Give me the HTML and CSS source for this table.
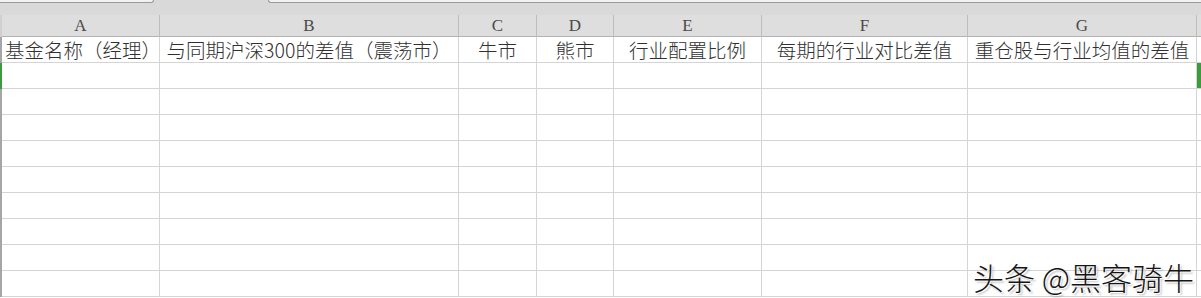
FILE: index.html
```html
<!DOCTYPE html>
<html lang="zh-CN">
<head>
  <meta charset="UTF-8" />
  <title>基金对比表</title>
  <link rel="stylesheet" href="styles.css">
</head>
<body>
  <div class="sheet">
    <!-- sheet tabs strip -->
    <div class="tabs">
      <div class="tab tab-left"></div>
      <div class="tab tab-right"></div>
    </div>

    <!-- column letters -->
    <div class="row head">
      <div class="gutter"></div>
      <div class="cell">A</div>
      <div class="cell">B</div>
      <div class="cell">C</div>
      <div class="cell">D</div>
      <div class="cell">E</div>
      <div class="cell">F</div>
      <div class="cell">G</div>
      <div class="cell filler"></div>
    </div>

    <!-- row 1: titles -->
    <div class="row">
      <div class="gutter"></div>
      <div class="cell left">基金名称（经理）</div>
      <div class="cell">与同期沪深300的差值（震荡市）</div>
      <div class="cell">牛市</div>
      <div class="cell">熊市</div>
      <div class="cell">行业配置比例</div>
      <div class="cell">每期的行业对比差值</div>
      <div class="cell">重仓股与行业均值的差值</div>
      <div class="cell filler"></div>
    </div>

    <!-- row 2 is the active one -->
    <div class="row active">
      <div class="gutter"></div>
      <div class="cell"></div><div class="cell"></div><div class="cell"></div><div class="cell"></div>
      <div class="cell"></div><div class="cell"></div><div class="cell"></div>
      <div class="cell filler"></div>
    </div>

    <div class="row">
      <div class="gutter"></div>
      <div class="cell"></div><div class="cell"></div><div class="cell"></div><div class="cell"></div>
      <div class="cell"></div><div class="cell"></div><div class="cell"></div>
      <div class="cell filler"></div>
    </div>
    <div class="row">
      <div class="gutter"></div>
      <div class="cell"></div><div class="cell"></div><div class="cell"></div><div class="cell"></div>
      <div class="cell"></div><div class="cell"></div><div class="cell"></div>
      <div class="cell filler"></div>
    </div>
    <div class="row">
      <div class="gutter"></div>
      <div class="cell"></div><div class="cell"></div><div class="cell"></div><div class="cell"></div>
      <div class="cell"></div><div class="cell"></div><div class="cell"></div>
      <div class="cell filler"></div>
    </div>
    <div class="row">
      <div class="gutter"></div>
      <div class="cell"></div><div class="cell"></div><div class="cell"></div><div class="cell"></div>
      <div class="cell"></div><div class="cell"></div><div class="cell"></div>
      <div class="cell filler"></div>
    </div>
    <div class="row">
      <div class="gutter"></div>
      <div class="cell"></div><div class="cell"></div><div class="cell"></div><div class="cell"></div>
      <div class="cell"></div><div class="cell"></div><div class="cell"></div>
      <div class="cell filler"></div>
    </div>
    <div class="row">
      <div class="gutter"></div>
      <div class="cell"></div><div class="cell"></div><div class="cell"></div><div class="cell"></div>
      <div class="cell"></div><div class="cell"></div><div class="cell"></div>
      <div class="cell filler"></div>
    </div>
    <div class="row">
      <div class="gutter"></div>
      <div class="cell"></div><div class="cell"></div><div class="cell"></div><div class="cell"></div>
      <div class="cell"></div><div class="cell"></div><div class="cell"></div>
      <div class="cell filler"></div>
    </div>
    <div class="row">
      <div class="gutter"></div>
      <div class="cell"></div><div class="cell"></div><div class="cell"></div><div class="cell"></div>
      <div class="cell"></div><div class="cell"></div><div class="cell"></div>
      <div class="cell filler"></div>
    </div>

    <div class="watermark">头条 @黑客骑牛</div>
  </div>
</body>
</html>
```

FILE: styles.css
```css
* {
  box-sizing: border-box;
}

body {
  margin: 0;
  background: #ffffff;
  overflow: hidden;
}

.sheet {
  position: relative;
  width: 1201px;
  height: 298px;
  overflow: hidden;
  font-family: "Noto Sans CJK SC", sans-serif;
}

/* tab strip above the column letters */
.tabs {
  height: 15px;
  background: #d9d9d9;
  display: flex;
  justify-content: space-between;
}

.tab {
  height: 3px;
  background: #f2f2f2;
  border-bottom: 1px solid #9a9a9a;
}

.tab-left {
  width: 154px;
  border-right: 1px solid #9a9a9a;
  border-bottom-right-radius: 4px;
}

.tab-right {
  width: 933px;
  border-left: 1px solid #9a9a9a;
  border-bottom-left-radius: 4px;
}

.row {
  display: grid;
  grid-template-columns: 2px 158px 299px 78px 77px 148px 206px 229px 4px;
  height: 26px;
}

.gutter {
  background: #a6a6a6;
}

.cell {
  border-right: 1px solid #d4d4d4;
  border-bottom: 1px solid #d4d4d4;
  display: flex;
  align-items: center;
  justify-content: center;
  white-space: nowrap;
  font-size: 19.5px;
  line-height: 22px;
  font-weight: 300;
  color: #303030;
}

.cell.left {
  justify-content: flex-start;
  padding-left: 3px;
}

.filler {
  border-right: none;
}

/* column letters */
.head {
  height: 22px;
  background: #dedede;
}

.head .cell {
  font-family: "Liberation Serif", serif;
  font-size: 17px;
  line-height: 20px;
  font-weight: 400;
  color: #4a4a4a;
  border-right-color: #bdbdbd;
  border-bottom-color: #b3b3b3;
  padding-top: 1px;
}

.head .gutter {
  background: #d0d0d0;
}

.active .gutter,
.active .filler {
  background: #3c9b3c;
}

.watermark {
  position: absolute;
  right: 7px;
  bottom: 3px;
  font-size: 31px;
  line-height: 36px;
  font-weight: 300;
  color: #151515;
  text-shadow: 1px 1px 0 rgba(255, 255, 255, 0.9), 2px 2px 2px rgba(120, 120, 120, 0.5);
  white-space: nowrap;
}
```
